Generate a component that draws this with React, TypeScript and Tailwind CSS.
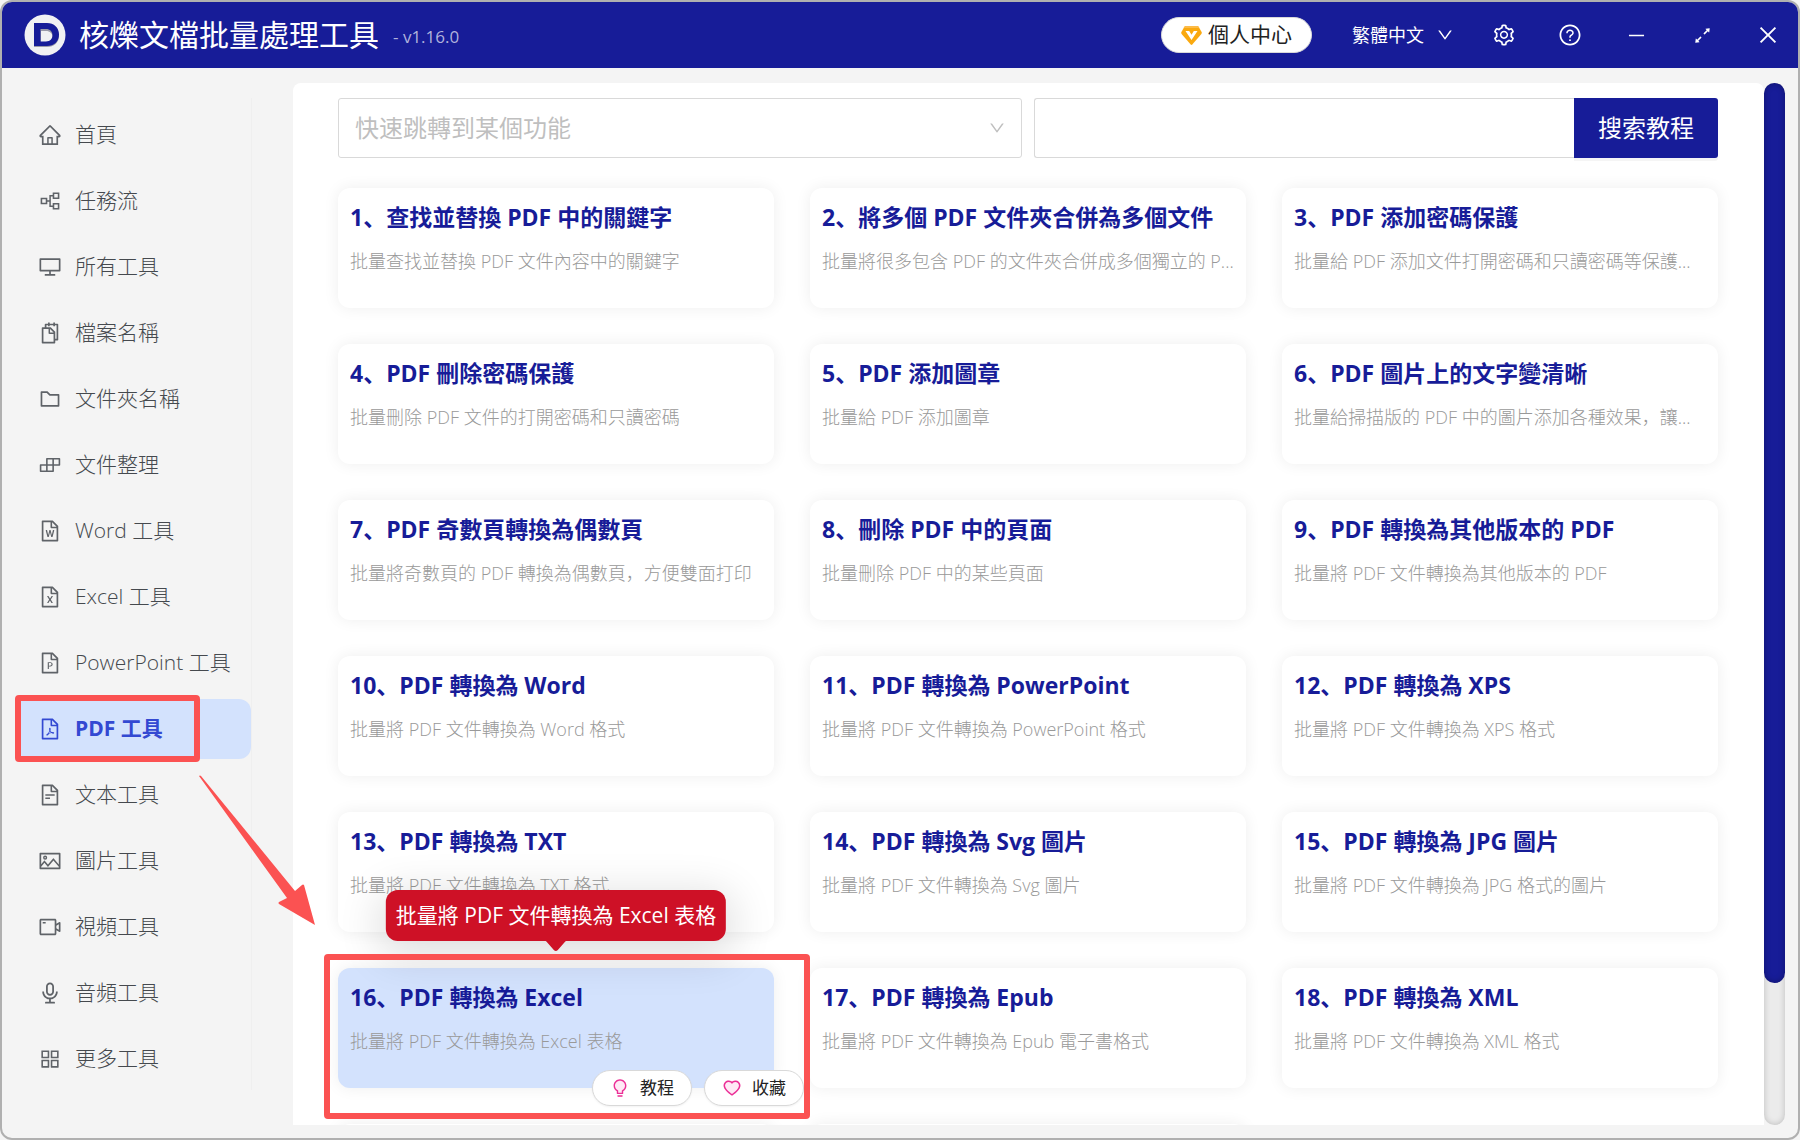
import type { ReactNode } from "react";
import type { IconType } from "react-icons";
import {
  AiOutlineHome,
  AiOutlinePartition,
  AiOutlineDesktop,
  AiOutlineSnippets,
  AiOutlineFolder,
  AiOutlineBuild,
  AiOutlineFileWord,
  AiOutlineFileExcel,
  AiOutlineFilePpt,
  AiOutlineFilePdf,
  AiOutlineFileText,
  AiOutlinePicture,
  AiOutlineVideoCamera,
  AiOutlineAudio,
  AiOutlineAppstore,
  AiOutlineSetting,
  AiOutlineQuestionCircle,
  AiOutlineMinus,
  AiOutlineArrowsAlt,
  AiOutlineClose,
  AiOutlineDown,
  AiOutlineBulb,
  AiFillBulb,
  AiOutlineHeart,
  AiFillHeart,
} from "react-icons/ai";

type NavItem = { icon: IconType; label: string };

const NAV: NavItem[] = [
  { icon: AiOutlineHome, label: "首頁" },
  { icon: AiOutlinePartition, label: "任務流" },
  { icon: AiOutlineDesktop, label: "所有工具" },
  { icon: AiOutlineSnippets, label: "檔案名稱" },
  { icon: AiOutlineFolder, label: "文件夾名稱" },
  { icon: AiOutlineBuild, label: "文件整理" },
  { icon: AiOutlineFileWord, label: "Word 工具" },
  { icon: AiOutlineFileExcel, label: "Excel 工具" },
  { icon: AiOutlineFilePpt, label: "PowerPoint 工具" },
  { icon: AiOutlineFilePdf, label: "PDF 工具" },
  { icon: AiOutlineFileText, label: "文本工具" },
  { icon: AiOutlinePicture, label: "圖片工具" },
  { icon: AiOutlineVideoCamera, label: "視頻工具" },
  { icon: AiOutlineAudio, label: "音頻工具" },
  { icon: AiOutlineAppstore, label: "更多工具" },
];

const ACTIVE_NAV = "PDF 工具";

const TOOLS: [string, string][] = [
  ["查找並替換 PDF 中的關鍵字", "批量查找並替換 PDF 文件內容中的關鍵字"],
  ["將多個 PDF 文件夾合併為多個文件", "批量將很多包含 PDF 的文件夾合併成多個獨立的 P..."],
  ["PDF 添加密碼保護", "批量給 PDF 添加文件打開密碼和只讀密碼等保護..."],
  ["PDF 刪除密碼保護", "批量刪除 PDF 文件的打開密碼和只讀密碼"],
  ["PDF 添加圖章", "批量給 PDF 添加圖章"],
  ["PDF 圖片上的文字變清晰", "批量給掃描版的 PDF 中的圖片添加各種效果，讓..."],
  ["PDF 奇數頁轉換為偶數頁", "批量將奇數頁的 PDF 轉換為偶數頁，方便雙面打印"],
  ["刪除 PDF 中的頁面", "批量刪除 PDF 中的某些頁面"],
  ["PDF 轉換為其他版本的 PDF", "批量將 PDF 文件轉換為其他版本的 PDF"],
  ["PDF 轉換為 Word", "批量將 PDF 文件轉換為 Word 格式"],
  ["PDF 轉換為 PowerPoint", "批量將 PDF 文件轉換為 PowerPoint 格式"],
  ["PDF 轉換為 XPS", "批量將 PDF 文件轉換為 XPS 格式"],
  ["PDF 轉換為 TXT", "批量將 PDF 文件轉換為 TXT 格式"],
  ["PDF 轉換為 Svg 圖片", "批量將 PDF 文件轉換為 Svg 圖片"],
  ["PDF 轉換為 JPG 圖片", "批量將 PDF 文件轉換為 JPG 格式的圖片"],
  ["PDF 轉換為 Excel", "批量將 PDF 文件轉換為 Excel 表格"],
  ["PDF 轉換為 Epub", "批量將 PDF 文件轉換為 Epub 電子書格式"],
  ["PDF 轉換為 XML", "批量將 PDF 文件轉換為 XML 格式"],
];

const ACTIVE_TOOL = 15;

function Logo() {
  return (
    <svg viewBox="0 0 42 42" className="size-[42px] shrink-0" aria-hidden="true">
      <circle cx="21" cy="21" r="20.5" fill="#f1f1f3" />
      <path
        fillRule="evenodd"
        d="M10 10h13c7 0 12 4.500 12 11s-5 11-12 11H10zM17 16v12h5c4 0 6.500-2.500 6.500-6s-2.500-6-6.500-6z"
        transform="translate(0 1)"
        fill="#9a9aa8"
      />
      <path
        fillRule="evenodd"
        d="M10 9h13c7 0 12 4.500 12 11.500S30 32 23 32H10zM16.500 15v12.500h5.500c4 0 6.500-2.500 6.500-6.200S26 15 22 15z"
        fill="#171c98"
      />
    </svg>
  );
}

function Gem() {
  return (
    <svg viewBox="0 0 21 21" className="size-[21px]" aria-hidden="true">
      <path d="M5 1h11q1 0 1.600.8L20.600 7q.5 1-.2 1.900L11.300 19.500q-.8.900-1.600 0L.6 8.900Q-.1 8 .4 7l3-5.200Q4 1 5 1z" fill="#faa90f" />
      <path d="M5 1h11q1 0 1.600.8L18.300 3H2.700l.7-1.200Q4 1 5 1z" fill="#fcbb48" />
      <path d="M4.500 6h3.700l2.300 3.800L12.800 6h3.700l-6 9z" fill="#fff" />
    </svg>
  );
}

function Header() {
  return (
    <header className="flex h-[66px] shrink-0 items-center bg-[#171c98] pl-[22px] text-white">
      <Logo />
      <h1 className="ml-[13px] text-[30px] leading-10">核爍文檔批量處理工具</h1>
      <span className="ml-3.5 pt-1 text-[17px] text-[#b0b2dc]">- v1.16.0</span>
      <div className="ml-auto flex items-center">
        <button className="mr-10 flex h-9 items-center gap-1.5 rounded-full border border-[#d9d9d9] bg-white px-[19px] text-[21px] text-[#222]">
          <Gem />
          個人中心
        </button>
        <button className="mr-5 flex items-center gap-3 text-[18px]">
          繁體中文
          <AiOutlineDown className="size-[18px]" />
        </button>
        <div className="flex gap-1.5">
          <HeaderButton label="設置" icon={<AiOutlineSetting className="size-6" />} />
          <HeaderButton label="幫助" icon={<AiOutlineQuestionCircle className="size-6" />} />
          <HeaderButton label="最小化" icon={<AiOutlineMinus className="size-[21px]" />} />
          <HeaderButton label="最大化" icon={<AiOutlineArrowsAlt className="size-[21px]" />} />
          <HeaderButton label="關閉" icon={<AiOutlineClose className="size-6" />} />
        </div>
      </div>
    </header>
  );
}

function HeaderButton({ label, icon }: { label: string; icon: ReactNode }) {
  return (
    <button aria-label={label} className="flex h-[66px] w-[60px] items-center justify-center">
      {icon}
    </button>
  );
}

function Sidebar() {
  return (
    <nav className="mt-[30px] mb-12 w-[250px] shrink-0 border-r border-[#efefef]">
      <ul className="flex flex-col gap-1.5 pt-[7px] pl-3.5">
        {NAV.map(({ icon: Icon, label }) => {
          const active = label === ACTIVE_NAV;
          return (
            <li key={label} className="relative">
              <a
                href="#"
                aria-current={active ? "page" : undefined}
                className={
                  "flex h-[60px] items-center gap-[13px] rounded-r-xl pl-[22px] text-[21px] whitespace-nowrap " +
                  (active ? "bg-[#d3e2fd] font-bold text-[#3349d2]" : "font-light text-[#45494e]")
                }
              >
                <Icon className={"size-6 shrink-0 " + (active ? "text-[#3349d2]" : "text-[#5f6368]")} />
                {label}
              </a>
              {active && (
                <>
                  <div className="pointer-events-none absolute -top-1 -left-px z-10 h-[67px] w-[185px] rounded-[4px] border-6 border-[#fb5252]" />
                  <svg
                    viewBox="0 0 116 152"
                    className="pointer-events-none absolute top-[76px] left-[183px] z-10 h-[152px] w-[116px]"
                    aria-hidden="true"
                  >
                    <path d="M0 1q1-1 2 0l94 115 7-6q1-1 2 0l11 40-36-21q-1-1 0-2l8-4z" fill="#fb5252" />
                  </svg>
                </>
              )}
            </li>
          );
        })}
      </ul>
    </nav>
  );
}

function ActionPill({ line, fill, label }: { line: ReactNode; fill: ReactNode; label: string }) {
  return (
    <button className="flex h-9 items-center gap-2.5 rounded-full border border-[#d9d9d9] bg-white px-[17px] text-[17px] text-[#222] shadow-xs">
      <span className="relative size-5">
        <span className="absolute inset-0 text-[#ffe9f5]">{fill}</span>
        <span className="absolute inset-0 text-[#eb2f96]">{line}</span>
      </span>
      {label}
    </button>
  );
}

function ToolCard({ index, title, desc }: { index: number; title: string; desc: string }) {
  const active = index === ACTIVE_TOOL;
  return (
    <article
      className={
        "relative h-[120px] rounded-xl px-3 pt-3 shadow-[0_0_16px_rgba(0,0,0,0.07)] " +
        (active ? "bg-[#d3e2fd]" : "bg-white")
      }
    >
      <h2 className="truncate text-[23px] leading-[34px] font-bold text-[#171c98]">
        {index + 1}、{title}
      </h2>
      <p className="mt-[11px] truncate text-[18px] leading-8 font-light text-[#999999]">{desc}</p>
      {active && (
        <>
          <div
            role="tooltip"
            className="absolute -top-[78px] left-1/2 z-10 flex h-[51px] -translate-x-1/2 items-center rounded-xl bg-[#ce1126] px-2.5 text-[21px] whitespace-nowrap text-white shadow-[0_9px_42px_8px_rgba(0,0,0,0.12)]"
          >
            {desc}
            <svg
              viewBox="0 0 26 12"
              className="absolute top-[50px] left-1/2 h-3 w-[26px] -translate-x-1/2"
              aria-hidden="true"
            >
              <path d="M0 0h26c-2 0-3 1-4 2l-7 8q-2 2-4 0L4 2C3 1 2 0 0 0z" fill="#ce1126" />
            </svg>
          </div>
          <div className="absolute -right-[30px] -bottom-[18px] z-10 flex gap-3">
            <ActionPill
              line={<AiOutlineBulb className="size-5" />}
              fill={<AiFillBulb className="size-5" />}
              label="教程"
            />
            <ActionPill
              line={<AiOutlineHeart className="size-5" />}
              fill={<AiFillHeart className="size-5" />}
              label="收藏"
            />
          </div>
          <div className="pointer-events-none absolute -top-3.5 -right-9 -bottom-[31px] -left-3.5 z-10 rounded-[4px] border-6 border-[#fb5252]" />
        </>
      )}
    </article>
  );
}

function SearchRow() {
  return (
    <form className="flex gap-3" onSubmit={(e) => e.preventDefault()}>
      <div className="relative flex-1">
        <select
          aria-label="快速跳轉到某個功能"
          defaultValue=""
          className="h-[60px] w-full appearance-none rounded-[3px] border border-[#d9d9d9] bg-white px-4 text-[24px] text-[#bfbfbf]"
        >
          <option value="">快速跳轉到某個功能</option>
        </select>
        <AiOutlineDown className="pointer-events-none absolute top-[21px] right-4 size-[18px] text-[#bfbfbf]" />
      </div>
      <div className="flex flex-1">
        <input
          aria-label="搜索教程"
          className="h-[60px] min-w-0 flex-1 rounded-l-[3px] border border-r-0 border-[#d9d9d9] bg-white px-4 text-[24px]"
        />
        <button className="h-[60px] w-36 rounded-r-[3px] bg-[#171c98] text-[24px] text-white shadow-[0_3px_0_rgba(0,0,0,0.04)]">
          搜索教程
        </button>
      </div>
    </form>
  );
}

export default function App() {
  return (
    <div className="h-screen bg-[#f4f4f4] font-['Open_Sans','Noto_Sans_CJK_SC',sans-serif]">
      <div className="flex h-full flex-col overflow-hidden rounded-xl border-2 border-[#b0b0b0] bg-[#f4f4f4]">
        <Header />
        <div className="flex min-h-0 flex-1">
          <Sidebar />
          <main className="mt-[15px] mb-[13px] ml-[41px] flex min-w-0 flex-1 flex-col gap-[30px] overflow-hidden rounded-t-lg bg-white pt-[15px] pr-[46px] pl-[45px]">
            <SearchRow />
            <div className="grid grid-cols-3 gap-9">
              {TOOLS.map(([title, desc], i) => (
                <ToolCard key={title} index={i} title={title} desc={desc} />
              ))}
              <div className="h-[120px] rounded-xl bg-white shadow-[0_0_16px_rgba(0,0,0,0.07)]" />
              <div className="h-[120px] rounded-xl bg-white shadow-[0_0_16px_rgba(0,0,0,0.07)]" />
            </div>
          </main>
          <div className="mt-[15px] mr-[13px] mb-[13px] w-[21px] shrink-0 rounded-full bg-[#ebebeb] pb-[142px] shadow-[inset_0_0_6px_rgba(0,0,0,0.2)]">
            <div className="h-full rounded-full bg-[#171c98] shadow-[inset_0_0_6px_rgba(0,0,0,0.3)]" />
          </div>
        </div>
      </div>
    </div>
  );
}
